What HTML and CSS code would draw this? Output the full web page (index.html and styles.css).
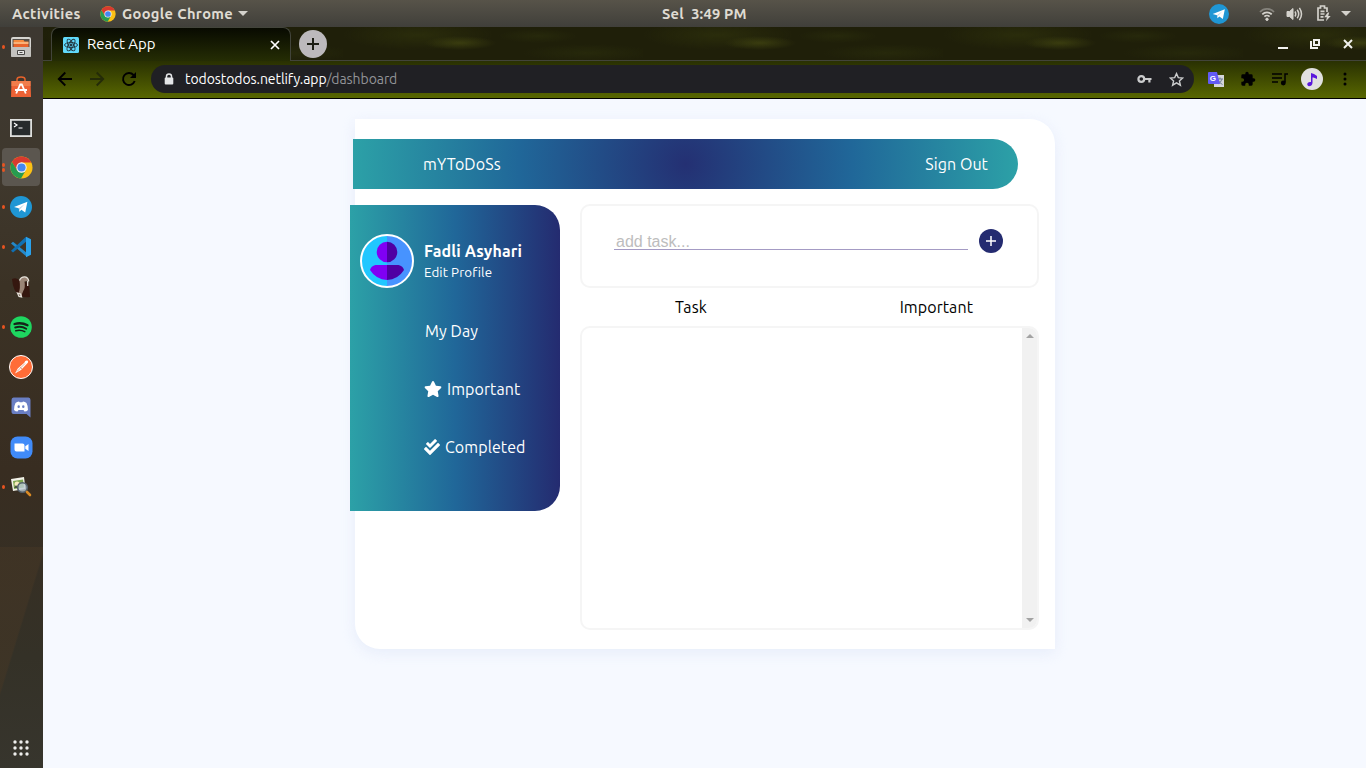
FILE: index.html
```html
<!DOCTYPE html>
<html lang="en">
<head>
<meta charset="utf-8">
<title>React App</title>
<link rel="stylesheet" href="styles.css">
</head>
<body>
<svg class="defs" width="0" height="0">
  <defs>
    <symbol id="chrome" viewBox="0 0 24 24">
      <circle cx="12" cy="12" r="11.5" fill="#fbc116"/>
      <path d="M12 .5A11.5 11.5 0 0 0 2.04 6.25L7.3 14.8 12 6.8h10.3A11.5 11.5 0 0 0 12 .5z" fill="#d93a2f"/>
      <path d="M2.04 6.25A11.5 11.5 0 0 0 11.5 23.5L16.6 14.6 12 17.2 7.4 14.8z" fill="#279b50"/>
      <circle cx="12" cy="12" r="5.4" fill="#f5f5f5"/>
      <circle cx="12" cy="12" r="4.3" fill="#4587f0"/>
    </symbol>
    <symbol id="telegram" viewBox="0 0 24 24">
      <circle cx="12" cy="12" r="12" fill="#1f96d4"/>
      <path d="M4.4 12 19 6.2 16.6 18l-4.2-2.9-2.2 2.1-.6-3.8z" fill="#fff"/>
      <path d="m9.6 13.4 6.6-4.8-5.2 5.6-.8 3z" fill="#b9d3e6"/>
    </symbol>
  </defs>
</svg>

<header class="topbar">
  <span class="activities">Activities</span>
  <svg class="topbar-chrome" width="16" height="16"><use href="#chrome"/></svg>
  <span class="app-name">Google Chrome</span>
  <i class="caret"></i>
  <span class="clock">Sel&nbsp; 3:49 PM</span>
  <div class="status">
    <svg width="20" height="20"><use href="#telegram"/></svg>
    <svg class="wifi" width="16" height="16" viewBox="0 0 16 16" fill="none" stroke="#d4d2cc" stroke-width="1.7"><path d="M1 6a9.5 9.5 0 0 1 14 0" stroke="#85837c"/><path d="M3.3 8.3a6.5 6.5 0 0 1 9.4 0M5.4 10.6a3.7 3.7 0 0 1 5.2 0"/><circle cx="8" cy="13.3" r="1.2" fill="#d4d2cc" stroke-width="1"/></svg>
    <svg class="volume" width="17" height="16" viewBox="0 0 17 16" fill="none" stroke="#d4d2cc" stroke-width="1.5"><path d="M1 5.5h2.5L7 2.5v11l-3.500-3H1z" fill="#d4d2cc" stroke-width="1"/><path d="M9 5.5q1.500 2.500 0 5M11.200 3.700q3 4.300 0 8.600M13.400 1.800q4.200 6.200 0 12.400"/></svg>
    <svg class="battery" width="15" height="17" viewBox="0 0 15 17" fill="none" stroke="#d4d2cc" stroke-width="1.700"><path d="M11 7V3H8.500V1h-4v2H2v12h6M4.500 6.300h4M4.500 9h4M4.500 11.800h3"/><path d="m11.800 7.500-3.600 4.700h2.700l-1 4 4.800-5.200h-2.500l1-3.500z" fill="#d4d2cc" stroke="none"/></svg>
    <i class="caret"></i>
  </div>
</header>

<div class="desktop">
  <nav class="dock">
    <div class="dock-item running"><svg width="22" height="24" viewBox="0 0 22 24"><rect x="1" y="2" width="20" height="20" rx="2" fill="#d6d5d1"/><path d="M2.500 4h17v9h-17z" fill="#554f49"/><path d="M3.500 5h10l1 1.500h4V9h-15z" fill="#f58a3d"/><path d="M3.500 9h15v3h-15z" fill="#e8642b"/><path d="M3.500 8h15" stroke="#ffd9b3"/><path d="M1 12h20v9q0 1-1 1H2q-1 0-1-1z" fill="#c3c2be"/><path d="M7.500 15.500h7v4h-7z" fill="#e6e6e4" stroke="#4a4947"/><path d="M9.500 17h3v1h-3z" fill="#4a4947"/></svg></div>
    <div class="dock-item"><svg width="22" height="24" viewBox="0 0 22 24"><path d="M7 8V4.500Q7 2 11 2t4 2.500V8" fill="none" stroke="#e8632b" stroke-width="1.500"/><path d="M1.500 6h19L21 22H1z" fill="#ed6235"/><path d="M1.500 6h19v5h-19z" fill="#f17d4b"/><path d="m6.200 18.500 4-9h1.600l4 9M5 15h12" fill="none" stroke="#fff" stroke-width="1.800"/></svg></div>
    <div class="dock-item terminal"><svg width="22" height="18" viewBox="0 0 22 18"><rect x=".9" y=".9" width="20.200" height="16.200" fill="#272b2c" stroke="#dedfdd" stroke-width="1.800"/><path d="m4 4 3 2-3 2M8.500 9h4" fill="none" stroke="#fff" stroke-width="1.200"/></svg></div>
    <div class="dock-item running twice active"><svg width="23" height="23"><use href="#chrome"/></svg></div>
    <div class="dock-item running"><svg width="22" height="22"><use href="#telegram"/></svg></div>
    <div class="dock-item running"><svg width="22" height="22" viewBox="0 0 22 22"><path d="m1 7.500 2-1.700L17 17v4z" fill="#2489ca"/><path d="M1 14.800 16 .8v5L3 16.500z" fill="#1070b3"/><path d="m16 .8 5 2.400v15.600L16 21.200z" fill="#2aa2ec"/></svg></div>
    <div class="dock-item"><svg width="22" height="24" viewBox="0 0 22 24"><path d="M2 4q5-2 8 2l9 2 1 14q-5 1-9-1-8-3-9-17z" fill="#35170f"/><path d="M9.500 5.500Q11 1.500 15 1.800q4 1 3.700 5.200l-1.700-1-2.500.5q1 6-1 9-2 3-1.500 6.500-2.500-.5-3.700-3.200 2.500-5 1.200-13.300z" fill="#9a8576"/><path d="M9.500 5.500Q11 1.500 15 1.800q3.500.7 3.700 4.500M17.700 6v5M7.500 18l3 1 1 3-2.500-.5z" fill="none" stroke="#e5e0d9" stroke-width="1.300"/></svg></div>
    <div class="dock-item running"><svg width="22" height="22" viewBox="0 0 22 22" fill="none" stroke="#15241a" stroke-linecap="round"><circle cx="11" cy="11" r="10.800" fill="#1ed760" stroke="none"/><path d="M4.500 8q7-2 13 1.300" stroke-width="2.300"/><path d="M5.200 11.500q6-1.800 11 1.200" stroke-width="1.900"/><path d="M5.800 14.700q5-1.200 9 1" stroke-width="1.500"/></svg></div>
    <div class="dock-item"><svg width="24" height="24" viewBox="0 0 24 24"><circle cx="12" cy="12" r="11.500" fill="#ff6c37" stroke="#fff"/><path d="m6 18.500 2.800-5 6.500-5.700q1-3 3.200-2.200 1.600 1.800-.8 3.300l-5.700 6.100z" fill="#fff"/><path d="m8 16.500 8-8M11 12l2 2" stroke="#d4947a" stroke-width=".8"/></svg></div>
    <div class="dock-item"><svg width="20" height="22" viewBox="0 0 20 22"><path d="M2.500 1.500h15Q19.500 1.500 19.500 4v17.500l-4-3.500h-13Q.5 18 .5 16V4q0-2.500 2-2.500z" fill="#6a7fc4"/><path d="M4.500 7Q6 5.500 8 5.500l.6.800h2.800l.6-.8q2 0 3.500 1.500 1.700 3.400 1.500 7-1.500 1.500-3.500 1.500l-1-1.500h-5L6.500 15.500Q4.500 15.500 3 14q-.2-3.600 1.500-7z" fill="#fff"/><ellipse cx="7.700" cy="10.700" rx="1.200" ry="1.400" fill="#6a7fc4"/><ellipse cx="12.300" cy="10.700" rx="1.200" ry="1.400" fill="#6a7fc4"/></svg></div>
    <div class="dock-item"><svg width="23" height="23" viewBox="0 0 23 23"><rect x=".5" y=".5" width="22" height="22" rx="7" fill="#408bf9"/><path d="M4.500 7.500h8q2 0 2 2v6h-8q-2 0-2-2zM15.300 10.300l3.200-2.300v7l-3.200-2.300z" fill="#fff"/></svg></div>
    <div class="dock-item running"><svg width="24" height="24" viewBox="0 0 24 24"><path d="m2 4 13-2 1.500 12L4 16z" fill="#f1f1e8"/><path d="m4 6 10-1.500 1 8L5 14z" fill="#7ea650"/><circle cx="8" cy="9" r="2.500" fill="#f7ecbd"/><path d="M5 13h4l-2-3z" fill="#45553d"/><circle cx="13.500" cy="12.500" r="4.800" fill="#bccbd3" fill-opacity=".8" stroke="#53606c" stroke-width="1.600"/><path d="m18 17 3 3" stroke="#d98a25" stroke-width="2.600" stroke-linecap="round"/></svg></div>
    <svg class="apps" width="16" height="16" viewBox="0 0 16 16" fill="#eeeeec"><circle cx="2" cy="2" r="1.700"/><circle cx="8" cy="2" r="1.700"/><circle cx="14" cy="2" r="1.700"/><circle cx="2" cy="8" r="1.700"/><circle cx="8" cy="8" r="1.700"/><circle cx="14" cy="8" r="1.700"/><circle cx="2" cy="14" r="1.700"/><circle cx="8" cy="14" r="1.700"/><circle cx="14" cy="14" r="1.700"/></svg>
  </nav>

  <div class="browser">
    <div class="tabs">
      <div class="tab">
        <svg width="16" height="16" viewBox="0 0 16 16" fill="none" stroke="#20333b" stroke-width=".9"><rect width="16" height="16" rx="1.500" fill="#61dafb" stroke="none"/><ellipse cx="8" cy="8" rx="6.500" ry="2.500"/><ellipse cx="8" cy="8" rx="6.500" ry="2.500" transform="rotate(60 8 8)"/><ellipse cx="8" cy="8" rx="6.500" ry="2.500" transform="rotate(120 8 8)"/><circle cx="8" cy="8" r="1.100" fill="#20333b"/></svg>
        <span class="tab-title">React App</span>
        <svg class="tab-close" width="10" height="10" viewBox="0 0 10 10" stroke="#fff" stroke-width="1.700"><path d="m1 1 8 8M9 1 1 9"/></svg>
      </div>
      <div class="new-tab"><svg width="12" height="12" stroke="#1c1d14" stroke-width="2"><path d="M6 0v12M0 6h12"/></svg></div>
      <div class="window-buttons">
        <svg width="10" height="10" stroke="#f1f1ee" stroke-width="2"><path d="M0 9h10"/></svg>
        <svg class="restore" width="10" height="10" viewBox="0 0 10 10" fill="none" stroke="#f1f1ee" stroke-width="2"><path d="M4 1h5v5H4zM1 2v7h7"/></svg>
        <svg width="10" height="10" stroke="#f1f1ee" stroke-width="2"><path d="m1 1 8 8M9 1 1 9"/></svg>
      </div>
    </div>
    <div class="toolbar">
      <svg width="16" height="16" viewBox="0 0 16 16" fill="none" stroke="#000" stroke-width="1.900"><path d="M15 8H2M8.300 1.500 1.800 8l6.500 6.500"/></svg>
      <svg width="16" height="16" viewBox="0 0 16 16" fill="none" stroke="#242b08" stroke-width="1.900"><path d="M1 8h13M7.700 1.500 14.200 8l-6.500 6.500"/></svg>
      <svg width="16" height="16" viewBox="0 0 16 16" fill="none" stroke="#000" stroke-width="1.900"><path d="M13.700 10A6 6 0 1 1 12.500 4l2 2"/><path d="M15 1v6H9z" fill="#000" stroke="none"/></svg>
      <div class="omnibox">
        <svg width="10" height="12" viewBox="0 0 10 12"><path d="M2.500 5V3.300q0-2.300 2.500-2.300t2.500 2.300V5" fill="none" stroke="#e4e5e7" stroke-width="1.500"/><rect x=".7" y="4.600" width="8.600" height="7" rx="1" fill="#e4e5e7"/></svg>
        <span class="url">todostodos.netlify.app<span class="path">/dashboard</span></span>
        <svg class="key" width="15" height="10" viewBox="0 0 15 10" fill="none" stroke="#cbcccd" stroke-width="2.200"><circle cx="4.300" cy="5" r="2.900"/><path d="M7 5h7.500M12.400 5v3.600"/></svg>
        <svg width="15" height="15" viewBox="0 0 15 15" fill="none" stroke="#cbcccd" stroke-width="1.400"><path d="m7.500 1.600 1.800 4 4.400.4-3.300 2.900 1 4.300-3.900-2.300-3.900 2.300 1-4.300L1.300 6l4.400-.4z"/></svg>
      </div>
      <div class="extensions">
        <svg width="16" height="17" viewBox="0 0 16 17"><rect x="6" y="4" width="10" height="12" fill="#d5d6da"/><path d="M9 8h6M12 6.500V8M14 8q-1 3.500-4 5M10.500 9.500q1 2.500 4 4" stroke="#718096" fill="none"/><path d="M1 1h8l3 12H1q-1 0-1-1V2q0-1 1-1z" fill="#625bf5"/><text class="g" x="1.800" y="10">G</text></svg>
        <svg width="16" height="16" viewBox="0 0 24 24" fill="#000"><path d="M20.500 11H19V7a2 2 0 0 0-2-2h-4V3.500a2.500 2.500 0 0 0-5 0V5H4a2 2 0 0 0-2 2v3.800h1.500a2.700 2.700 0 0 1 0 5.400H2V20a2 2 0 0 0 2 2h3.800v-1.500a2.700 2.700 0 0 1 5.400 0V22H17a2 2 0 0 0 2-2v-4h1.500a2.500 2.500 0 0 0 0-5z"/></svg>
        <svg width="16" height="14" viewBox="0 0 16 14" fill="none" stroke="#000" stroke-width="1.500"><path d="M0 2h10M0 6h10M0 10h6M16 2h-3v8.500"/><circle cx="11.300" cy="11" r="1.700" fill="#000"/></svg>
        <svg width="22" height="22" viewBox="0 0 22 22"><circle cx="11" cy="11" r="11" fill="#e1e1e0"/><path d="M10 5q3 .4 6 3v3q-3-2-4.500-1.500V15q-.6 3.300-3.600 3.300Q5.600 17.500 6.500 15.300 8 13.500 10 14z" fill="#5a18dc"/></svg>
        <svg class="dots" width="4" height="14" fill="#000"><circle cx="2" cy="2" r="1.500"/><circle cx="2" cy="7" r="1.500"/><circle cx="2" cy="12" r="1.500"/></svg>
      </div>
    </div>

    <main class="page">
      <div class="card">
        <div class="app-header">
          <span class="brand">mYToDoSs</span>
          <span class="sign-out">Sign Out</span>
        </div>
        <div class="columns">
          <aside class="sidebar">
            <div class="profile">
              <svg class="avatar" width="54" height="54" viewBox="0 0 54 54"><circle cx="27" cy="27" r="26" fill="#21c7ff"/><path d="M27 1a26 26 0 0 1 0 52z" fill="#4793ff"/><path d="M27 7.700a10.300 10.300 0 0 0 0 20.600zM27 31H15.500Q11 32 10 36q6 9.500 17 10z" fill="#8000f4"/><path d="M27 7.700a10.300 10.300 0 0 1 0 20.600zM27 31h11.500Q43 32 44 36q-6 9.500-17 10z" fill="#4f00a3"/><circle cx="27" cy="27" r="26" fill="none" stroke="#fff" stroke-width="2"/></svg>
              <div class="who"><span class="name">Fadli Asyhari</span><span class="edit">Edit Profile</span></div>
            </div>
            <div class="menu">
              <div class="menu-item"><span class="my-day">My Day</span></div>
              <div class="menu-item"><svg width="18" height="16" viewBox="0 0 576 512" fill="#fff"><path d="M259.300 17.800 194 150.200 47.900 171.500c-26.200 3.800-36.700 36.100-17.700 54.600l105.700 103-25 145.500c-4.500 26.300 23.200 46 46.400 33.700L288 439.600l130.700 68.700c23.200 12.200 50.900-7.400 46.400-33.700l-25-145.500 105.700-103c19-18.500 8.500-50.800-17.700-54.600L382 150.200 316.700 17.800c-11.700-23.600-45.600-23.900-57.400 0z"/></svg><span class="important">Important</span></div>
              <div class="menu-item"><svg width="16" height="16" viewBox="0 0 512 512" fill="#fff"><path d="m505 174.800-39.600-39.600c-9.400-9.400-24.600-9.400-33.900 0L192 374.700 80.600 263.200c-9.400-9.400-24.600-9.400-33.900 0L7 302.900c-9.400 9.400-9.400 24.600 0 34L175 505c9.400 9.400 24.600 9.400 33.900 0l296-296.200c9.400-9.500 9.400-24.700.1-34zm-324.300 106c6.200 6.300 16.400 6.300 22.600 0l208-208.200c6.200-6.300 6.200-16.400 0-22.600L366.100 4.700c-6.200-6.300-16.400-6.300-22.600 0L192 156.200l-55.400-55.500c-6.200-6.300-16.400-6.300-22.600 0L68.700 146c-6.200 6.300-6.200 16.400 0 22.600l112 112.200z"/></svg><span class="completed">Completed</span></div>
            </div>
          </aside>
          <section class="tasks">
            <div class="add-box">
              <input class="add-input" type="text" placeholder="add task...">
              <div class="add-button"><svg width="10" height="10" stroke="#fff" stroke-width="1.500"><path d="M5 0v10M0 5h10"/></svg></div>
            </div>
            <div class="headings"><span class="col-task">Task</span><span class="col-important">Important</span></div>
            <div class="list">
              <div class="scrollbar"><i class="up"></i><i class="down"></i></div>
            </div>
          </section>
        </div>
      </div>
    </main>
  </div>
</div>
</body>
</html>
```
FILE: styles.css
```css
* { box-sizing: border-box; }
body {
  margin: 0;
  width: 1366px;
  height: 768px;
  overflow: hidden;
  font-family: Ubuntu, "Noto Sans", "Open Sans", sans-serif;
  font-size: 16px;
  color: #000;
}
svg { display: block; flex: none; }
span { white-space: nowrap; }
.defs { position: absolute; }

/* desktop top bar */
.topbar {
  height: 27px;
  display: grid;
  align-items: center;
  padding-left: 12px;
  grid-template-columns: 88px 22px 112px auto 1fr auto;
  background: linear-gradient(#575349, #403f3a);
  color: #dfdbd2;
  font-weight: bold;
  font-size: 14.67px;
  letter-spacing: .35px;
}
.topbar > span { padding-bottom: 1px; }
.caret {
  width: 0;
  height: 0;
  margin-left: 4px;
  border: 5px solid transparent;
  border-top-color: #d4d2cc;
  border-bottom: 0;
}
.clock { justify-self: start; margin-left: 414px; letter-spacing: .2px; }
.status { display: flex; align-items: center; padding-right: 15px; }
.wifi { margin-left: 30px; }
.volume { margin-left: 11px; }
.battery { margin-left: 13px; }
.status .caret { margin-left: 10px; }

/* dock */
.desktop { display: flex; height: 741px; }
.dock {
  width: 43px;
  display: flex;
  flex-direction: column;
  background:
    linear-gradient(107deg, #44362599 0 49%, transparent 51%) 0 520px / 43px 154px no-repeat,
    linear-gradient(#3d3831, #3f382d 20%, #3b3225 35%, #382d21 60%, #343127 85%, #37352d);
}
.dock-item {
  height: 40px;
  width: 38px;
  margin-left: 2px;
  display: grid;
  place-items: center;
  position: relative;
}
.dock-item.active { background: #5b564f; border-radius: 4px; height: 38px; margin-top: 1px; margin-bottom: 1px; }
.terminal { padding-top: 2px; }
.running::before {
  content: "";
  position: absolute;
  left: 0;
  top: 18px;
  width: 3px;
  height: 4px;
  border-radius: 50%;
  background: #e95420;
}
.twice::before { top: 15px; box-shadow: 0 5px #e95420; }
.apps { margin: auto 0 12px 13px; }

/* browser chrome */
.browser { width: 1323px; display: flex; flex-direction: column; }
.tabs {
  height: 34px;
  display: flex;
  border-bottom: 1px solid #42443a;
  background:
    radial-gradient(ellipse 36px 7px at 117px 16px, #454912aa, transparent),
    radial-gradient(ellipse 75px 15px at 75px 8px, #34380d88, transparent),
    radial-gradient(ellipse 65px 9px at 245px 26px, #2d310d88, transparent),
    radial-gradient(ellipse 40px 7px at 195px 9px, #2d310d88, transparent),
    #1f1f09;
  background-size: 300px 33px;
}
.tab {
  width: 240px;
  height: 34px;
  margin-left: 8px;
  padding: 0 10px 0 11px;
  display: flex;
  align-items: center;
  border: 1px solid #42443a;
  border-bottom: 0;
  border-radius: 8px 8px 0 0;
  background: linear-gradient(#080a01, #252d04);
  color: #fff;
}
.tab-title { margin-left: 8px; padding-bottom: 2px; font-size: 15px; letter-spacing: -.05px; }
.tab-close { margin-left: auto; }
.new-tab {
  width: 28px;
  height: 28px;
  margin: 3px 0 0 8px;
  border-radius: 50%;
  background: #bcb9bc;
  display: grid;
  place-items: center;
}
.window-buttons { display: flex; align-items: center; gap: 22px; margin-left: auto; padding-right: 13px; }
.restore { margin-right: 1px; }
.toolbar {
  height: 38px;
  display: flex;
  align-items: center;
  gap: 16px;
  padding: 0 19px 1px 14px;
  border-bottom: 1px solid #000;
  background: linear-gradient(#293002, #586700);
}
.omnibox {
  flex: none;
  width: 1043px;
  height: 28px;
  margin-left: -2px;
  padding: 0 10px 0 13px;
  border-radius: 14px;
  background: #202024;
  display: flex;
  align-items: center;
  color: #fff;
  font-size: 14px;
}
.url { margin-left: 11px; letter-spacing: -.07px; }
.path { color: #929397; }
.key { margin-left: auto; margin-right: 17px; }
.extensions { display: flex; align-items: center; gap: 16px; margin-left: -2px; }
.extensions svg:nth-child(4) { margin-left: -3px; }
.dots { margin-left: 4px; }
.g { font: bold 8px "Liberation Sans", sans-serif; fill: #fff; }

/* page */
.page { flex: 1; background: #f6f9ff; padding-top: 20px; letter-spacing: .08px; }
.card {
  width: 700px;
  height: 530px;
  margin-left: 312px;
  padding-top: 20px;
  background: #fff;
  border-radius: 0 25px 0 25px;
  box-shadow: 0 4px 14px #dfe7f7aa;
}
.app-header {
  width: 665px;
  height: 50px;
  margin-left: -2px;
  padding: 0 30px 0 70px;
  display: flex;
  align-items: center;
  justify-content: space-between;
  border-radius: 0 25px 25px 0;
  background: radial-gradient(circle, #243073 0%, #206799 50%, #2ca1a7 100%);
  color: #fff;
}
.columns { display: flex; align-items: flex-start; margin: 15px 0 0 -5px; }
.sidebar {
  width: 210px;
  height: 306px;
  margin-top: 1px;
  padding-top: 29px;
  border-radius: 0 25px 25px 0;
  background: linear-gradient(90deg, #2ca1a7, #206799 50%, #242b70);
  color: #fff;
}
.profile { display: flex; padding-left: 10px; gap: 10px; }
.who { display: flex; flex-direction: column; padding-top: 6px; }
.name { font-weight: bold; line-height: 22px; letter-spacing: .12px; }
.edit { font-size: 13.33px; line-height: 22px; }
.menu { padding: 14px 0 0 75px; }
.menu-item { height: 58px; display: flex; align-items: center; gap: 5px; }
.menu-item svg { margin-left: -1px; }
.tasks { width: 459px; margin-left: 20px; }
.add-box {
  height: 84px;
  border: 2px solid #f5f5f5;
  border-radius: 10px;
  display: flex;
  padding: 23px 0 0 32px;
}
.add-input {
  width: 354px;
  height: 21px;
  padding: 5px 2px 0;
  border: 0;
  border-bottom: 1px solid #a49bc4;
  outline: 0;
  background: none;
  font: 16px/15px "Liberation Sans", Arial, sans-serif;
}
.add-input::placeholder { color: #bdbdbd; }
.add-button {
  width: 24px;
  height: 24px;
  margin-left: 11px;
  border-radius: 50%;
  background: #242b70;
  display: grid;
  place-items: center;
}
.headings { height: 38px; display: flex; align-items: center; justify-content: space-between; padding: 0 66px 0 95px; }
.list {
  height: 304px;
  border: 2px solid #f5f5f5;
  border-radius: 10px;
  overflow: hidden;
  display: flex;
  justify-content: flex-end;
}
.scrollbar {
  width: 15px;
  background: #f1f1f1;
  display: flex;
  flex-direction: column;
  align-items: center;
  justify-content: space-between;
  padding: 6px 0;
}
.scrollbar i { border: 4px solid transparent; }
.up { border-top: 0 !important; border-bottom-color: #a3a3a3 !important; }
.down { border-bottom: 0 !important; border-top-color: #a3a3a3 !important; }
```
